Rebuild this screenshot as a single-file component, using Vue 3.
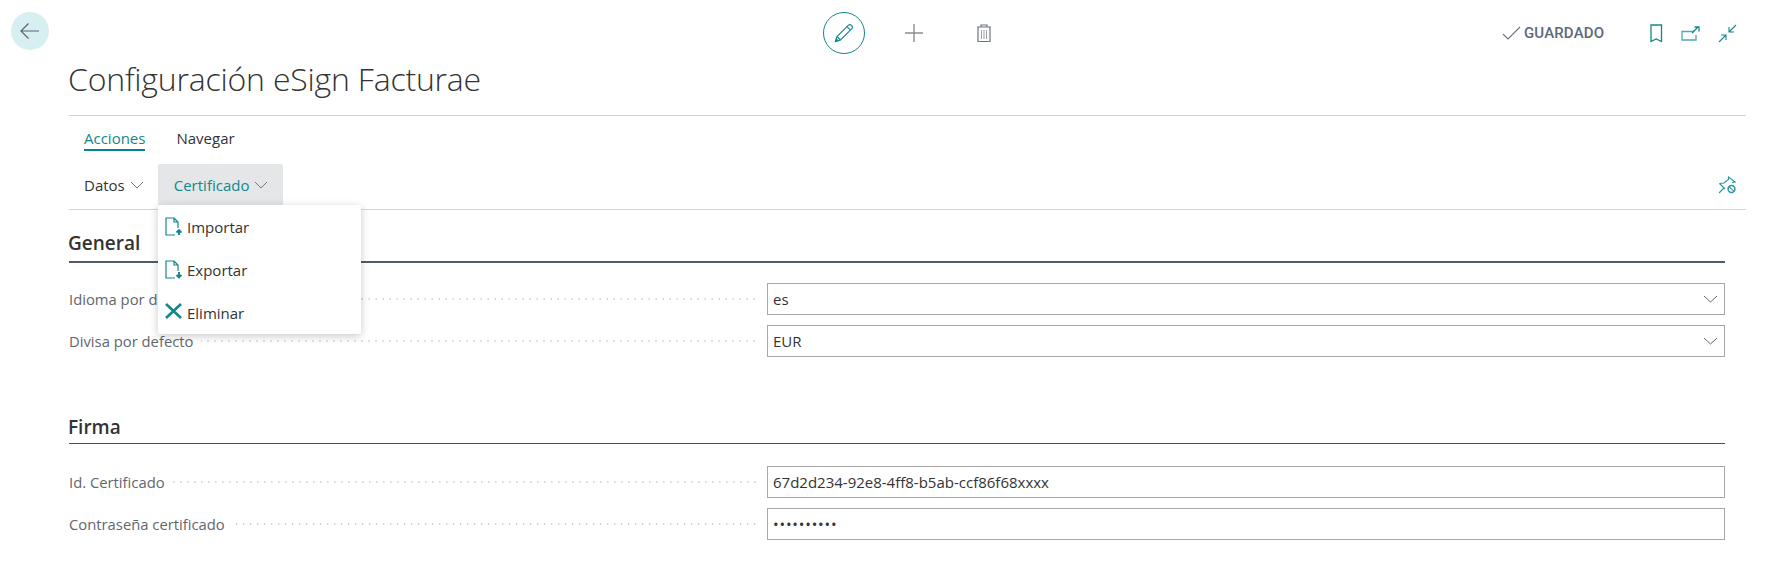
<template>
  <div class="page">
    <header class="top">
      <button class="back">
        <svg width="22" height="18" viewBox="0 0 22 18" fill="none" stroke="#5c6470" stroke-width="1.2"><path d="M20 9H2M9.5 1.5 2 9l7.5 7.5"/></svg>
      </button>
      <div class="tools">
        <span class="edit">
          <svg width="20" height="20" viewBox="0 0 20 20" fill="none" stroke="#14868c" stroke-width="1.1"><path d="M1.5 18.500 3 13.500 14.500 2.200a1.800 1.800 0 0 1 2.600 0l.8.8a1.800 1.800 0 0 1 0 2.600L6.500 17Z"/><path d="M3 13.500 6.500 17M13 3.700l3.400 3.400"/><path d="M1.500 18.500 2.300 16l1.700 1.700Z" fill="#14868c"/></svg>
        </span>
        <svg class="plus" width="20" height="20" viewBox="0 0 20 20" stroke="#8a8d93" stroke-width="1.4"><path d="M10 1v18M1 10h18"/></svg>
        <svg class="trash" width="16" height="20" viewBox="0 0 16 20" fill="none" stroke="#6f7580" stroke-width="1.2"><path d="M1 4h14M5 4V2h6v2M2 4v14.500h12V4"/><path d="M5.500 7v9M8 7v9M10.500 7v9" stroke-width="1" stroke="#9a9ea6"/></svg>
      </div>
      <div class="status">
        <svg width="20" height="14" viewBox="0 0 20 14" fill="none" stroke="#6b7280" stroke-width="1.100"><path d="M1 8l5 5L18 1"/></svg>
        <span>GUARDADO</span>
      </div>
      <div class="right-icons">
        <svg width="14" height="19" viewBox="0 0 14 19" fill="none" stroke="#14868c" stroke-width="1.300"><path d="M2 1h10.500v16.500L7.200 15 2 17.500Z"/></svg>
        <svg width="19" height="15" viewBox="0 0 19 15" fill="none" stroke="#4fa9ad" stroke-width="1.300"><path d="M13 5.500H1v8.500h14V9"/><path d="M11 7l6-6M13.500 1H18v4.500" stroke="#14868c"/></svg>
        <svg width="19" height="19" viewBox="0 0 19 19" fill="none" stroke="#14868c" stroke-width="1.100"><path d="M18 1l-7 7M11 3v5h5M1 18l7-7M3 11h5v5"/></svg>
      </div>
    </header>

    <div class="content">
      <h1>Configuración eSign Facturae</h1>
      <nav class="tabs">
        <span class="tab active">Acciones</span>
        <span class="tab">Navegar</span>
      </nav>
      <div class="actions">
        <span class="act">Datos
          <svg class="chev" width="14" height="8" viewBox="0 0 14 8" fill="none" stroke="#777" stroke-width="1"><path d="M1 1l6 6 6-6"/></svg>
        </span>
        <span class="act open">Certificado
          <svg class="chev" width="14" height="8" viewBox="0 0 14 8" fill="none" stroke="#777" stroke-width="1"><path d="M1 1l6 6 6-6"/></svg>
        </span>
        <svg class="pin" width="18" height="18" viewBox="0 0 18 18" fill="none" stroke="#2a959a" stroke-width="1.100"><path d="M1 17l5-5M1.500 7.500 6 7l4.500-3.500L10.500 1l6.500 5-3 .5"/><path d="M1.500 7.500 7 13"/><circle cx="13.500" cy="13" r="3.400" stroke-width="1.500"/><path d="M11.200 10.800l4.600 4.400"/></svg>
        <div class="menu">
          <div class="item">
            <svg width="17" height="19" viewBox="0 0 17 19" fill="none" stroke="#14868c" stroke-width="1.200"><path d="M10 18H1V1h8l4 4v6M9 1v4h4"/><path d="M14 18v-4.500M11.500 15.500 14 13l2.500 2.500" stroke-width="1.900"/></svg>
            <span>Importar</span>
          </div>
          <div class="item">
            <svg width="17" height="19" viewBox="0 0 17 19" fill="none" stroke="#14868c" stroke-width="1.200"><path d="M10 18H1V1h8l4 4v6M9 1v4h4"/><path d="M14 12v5M11.500 15 14 17.500l2.500-2.500" stroke-width="1.900"/></svg>
            <span>Exportar</span>
          </div>
          <div class="item">
            <svg class="del" width="17" height="16" viewBox="0 0 17 16" fill="none" stroke="#14868c" stroke-width="2.600"><path d="M1 1l15 14M16 1 1 15"/></svg>
            <span>Eliminar</span>
          </div>
        </div>
      </div>

      <section class="group">
        <h2>General</h2>
        <div class="field" v-for="f in general" :key="f.label">
          <label>{{ f.label }}</label>
          <span class="dots"></span>
          <div class="input">
            <span>{{ f.value }}</span>
            <svg width="15" height="8" viewBox="0 0 15 8" fill="none" stroke="#666" stroke-width="1"><path d="M1 1l6.500 6L14 1"/></svg>
          </div>
        </div>
      </section>

      <section class="group second">
        <h2>Firma</h2>
        <div class="field" v-for="f in firma" :key="f.label">
          <label>{{ f.label }}</label>
          <span class="dots"></span>
          <div class="input" :class="{ secret: f.secret }"><span>{{ f.value }}</span></div>
        </div>
      </section>
    </div>
  </div>
</template>

<script setup>
const general = [
  { label: 'Idioma por defecto', value: 'es' },
  { label: 'Divisa por defecto', value: 'EUR' }
]
const firma = [
  { label: 'Id. Certificado', value: '67d2d234-92e8-4ff8-b5ab-ccf86f68xxxx' },
  { label: 'Contraseña certificado', value: '••••••••••', secret: true }
]
</script>

<style>
html, body { margin: 0; background: #fff; }
</style>

<style scoped>
.page {
  width: 1787px;
  height: 561px;
  overflow: hidden;
  background: #fff;
  color: #333;
  font-family: "Open Sans", "Liberation Sans", sans-serif;
  font-size: 15px;
}
.top {
  position: relative;
  height: 62px;
  display: flex;
  align-items: flex-start;
}
.back {
  width: 38px;
  height: 38px;
  margin: 12px 0 0 11px;
  padding: 0;
  border: 0;
  border-radius: 50%;
  background: #d8eff2;
  display: flex;
  align-items: center;
  justify-content: center;
}
.tools {
  display: flex;
  align-items: center;
  margin: 12px 0 0 774px;
}
.edit {
  width: 42px;
  height: 42px;
  box-sizing: border-box;
  border: 1px solid #14868c;
  border-radius: 50%;
  display: flex;
  align-items: center;
  justify-content: center;
}
.plus { margin-left: 39px; }
.trash { margin-left: 52px; }
.status {
  display: flex;
  align-items: center;
  gap: 2px;
  margin: 26px 0 0 510px;
  color: #606878;
  font-family: Roboto, "Liberation Sans", sans-serif;
  font-size: 15px;
  font-weight: 500;
  letter-spacing: 0.15px;
  line-height: 14px;
}
.right-icons {
  display: flex;
  align-items: center;
  gap: 18px;
  margin: 24px 0 0 45px;
}
.content { padding: 0 41px 0 69px; }
h1 {
  margin: 0;
  height: 53px;
  font-size: 32px;
  letter-spacing: -0.2px;
  line-height: 34px;
  font-weight: 300;
  color: #333;
  border-bottom: 1px solid #d6d6d6;
  text-indent: -1px;
}
.tabs {
  display: flex;
  gap: 31px;
  padding: 12px 0 0 15px;
  height: 37px;
  box-sizing: border-box;
}
.tab { line-height: 20px; height: 23px; box-sizing: border-box; }
.tab.active { color: #14868c; border-bottom: 2px solid #00868c; }
.actions {
  position: relative;
  height: 57px;
  display: flex;
  align-items: flex-start;
  padding-top: 11px;
  box-sizing: border-box;
  border-bottom: 1px solid #d6d6d6;
}
.act {
  height: 42px;
  display: flex;
  align-items: center;
  gap: 5px;
  padding: 0 15px 0 16px;
}
.act:first-child { padding: 0 14px 0 15px; }
.open {
  background: #e5e6e8;
  color: #14868c;
  border-radius: 2px;
}
.pin { margin: 12px 10px 0 auto; }
.menu {
  position: absolute;
  left: 89px;
  top: 52px;
  width: 203px;
  background: #fff;
  border-radius: 2px;
  box-shadow: 0 2px 8px rgba(0, 0, 0, 0.22);
  z-index: 3;
}
.item {
  height: 43px;
  display: flex;
  align-items: center;
  gap: 5px;
  padding: 0 0 0 7px;
}
.del { margin-top: -4px; }
.group { margin-right: 21px; }
.group h2 {
  margin: 0 0 20px;
  padding: 20px 0 5px;
  font-size: 19px;
  line-height: 26px;
  font-weight: 600;
  color: #333;
  border-bottom: 2px solid #505c6d;
  text-indent: -1px;
}
.second { margin-top: 57px; }
.second h2 { padding: 0 0 3px; margin-bottom: 22px; border-bottom: 1px solid #45505f; }
.field {
  display: flex;
  align-items: center;
  height: 32px;
  margin-bottom: 10px;
  color: #5f6670;
}
.field label { white-space: nowrap; font-size: 14.8px; }
.dots {
  flex: 1;
  height: 2px;
  margin: 0 9px 0 8px;
  background-image: radial-gradient(circle, #c4c4c4 0.8px, transparent 1px);
  background-size: 7px 2px;
  background-repeat: repeat-x;
  background-position: right center;
}
.input {
  width: 958px;
  height: 32px;
  box-sizing: border-box;
  border: 1px solid #a8a8a8;
  display: flex;
  align-items: center;
  justify-content: space-between;
  padding: 0 6px 0 5px;
  color: #333;
}
.secret { letter-spacing: 0.8px; }
</style>
